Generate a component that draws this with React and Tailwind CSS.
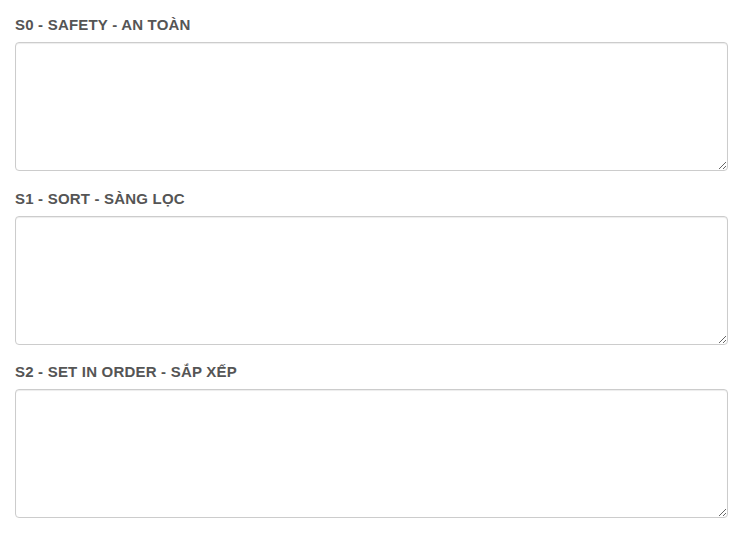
const sections = [
  { id: 's0', label: 'S0 - SAFETY - AN TOÀN' },
  { id: 's1', label: 'S1 - SORT - SÀNG LỌC' },
  { id: 's2', label: 'S2 - SET IN ORDER - SẮP XẾP' },
];

export default function App() {
  return (
    <div
      className="bg-white min-h-[533px] pt-[15px] pl-[15px]"
      style={{ fontFamily: '"Liberation Sans", Arial, sans-serif' }}
    >
      {sections.map((s) => (
        <div key={s.id} className="mb-[17.5px] w-[713px]">
          <label
            htmlFor={s.id}
            className="block text-[15px] leading-[20px] tracking-[0.2px] font-bold text-[#555] mb-[7px]"
          >
            {s.label}
          </label>
          <textarea
            id={s.id}
            className="block w-full h-[129px] border border-[#ccc] rounded-[4px] bg-white px-3 py-1.5 text-[14px] text-[#555] shadow-[inset_0_1px_1px_rgba(0,0,0,0.075)] outline-none"
          />
        </div>
      ))}
    </div>
  );
}
